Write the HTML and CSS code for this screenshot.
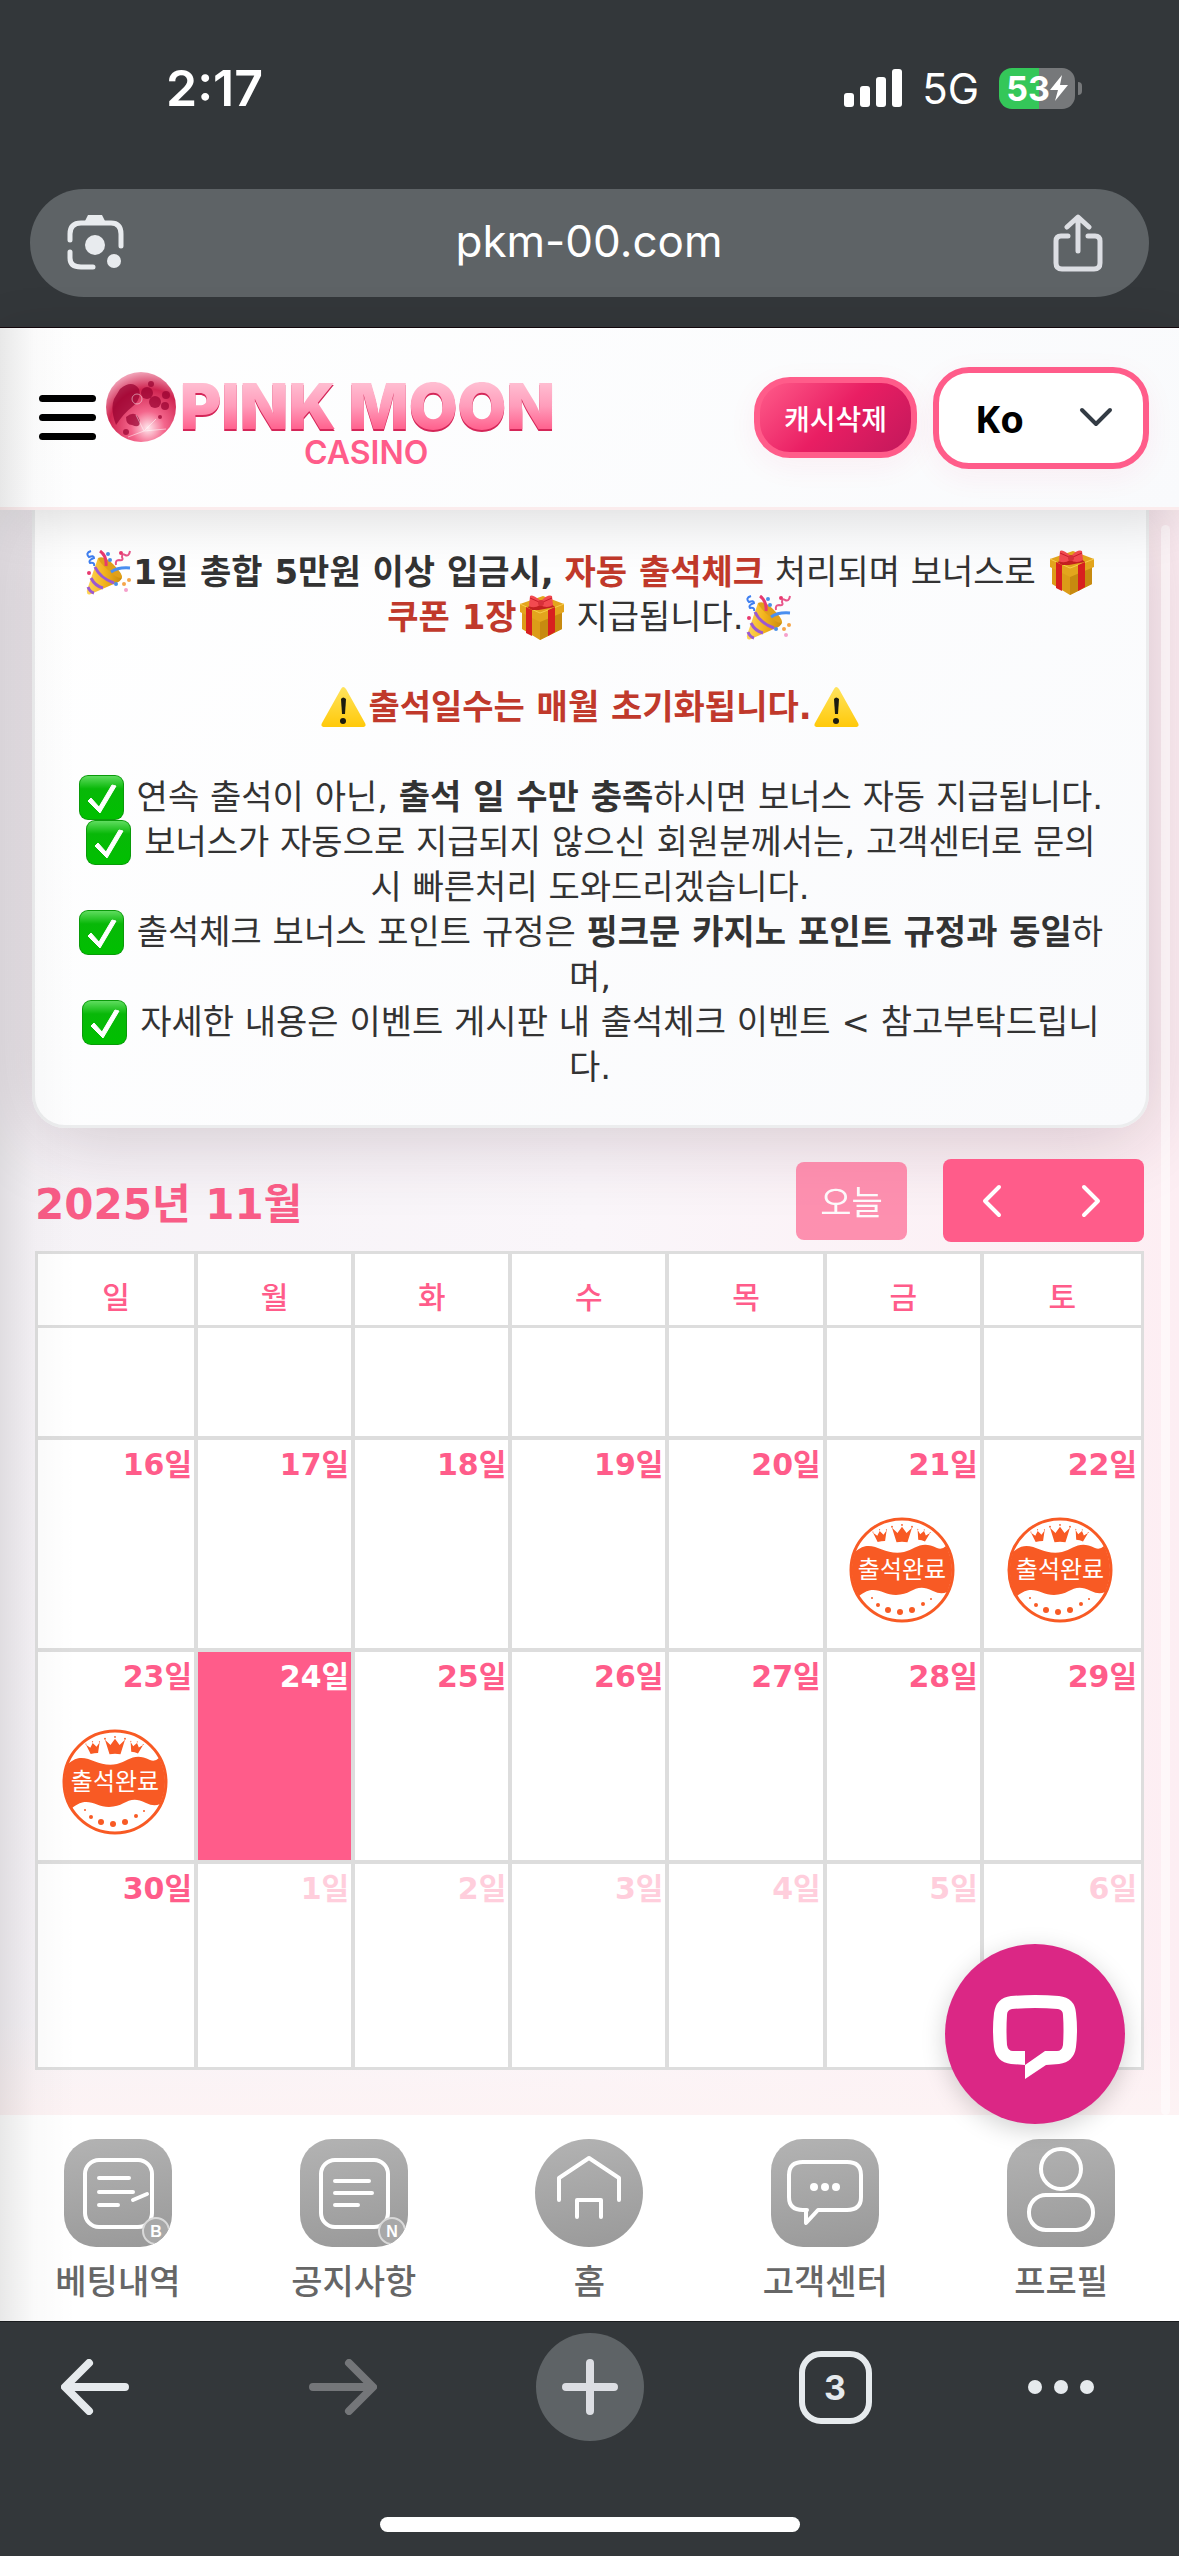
FILE: index.html
```html
<!DOCTYPE html>
<html lang="ko">
<head>
  <meta charset="UTF-8">
  <meta name="viewport" content="width=device-width, initial-scale=1">
  <title>PINK MOON CASINO</title>
  <link rel="stylesheet" href="styles.css">
</head>
<body>

  <!-- Shared drawings -->
  <svg class="defs" aria-hidden="true">
    <defs>
      <linearGradient id="gold" x1="0" y1="0" x2="1" y2="0">
        <stop offset="0" stop-color="#ffd75a"/>
        <stop offset="0.5" stop-color="#f2b31c"/>
        <stop offset="1" stop-color="#c98a0a"/>
      </linearGradient>
      <linearGradient id="green" x1="0" y1="0" x2="0" y2="1">
        <stop offset="0" stop-color="#5fdc5f"/>
        <stop offset="0.3" stop-color="#08b808"/>
        <stop offset="1" stop-color="#00c000"/>
      </linearGradient>
      <linearGradient id="warn" x1="0" y1="0" x2="0" y2="1">
        <stop offset="0" stop-color="#ffe45e"/>
        <stop offset="1" stop-color="#ffc90a"/>
      </linearGradient>
      <symbol id="popper" viewBox="0 0 45 45">
        <path d="M12 8 L36 28 Q34 32 30 33 L5 44 Q0 46 1 40 Z" fill="url(#gold)"/>
        <path d="M12 8 Q18 5 27 14 Q37 24 36 28 Q31 29 22 20 Q13 12 12 8 Z" fill="#e0a01a"/>
        <path d="M9 17 Q14 28 28 33 M5 28 Q9 36 17 38 M2 37 Q4 42 8 43" stroke="#9b59d0" stroke-width="3" fill="none"/>
        <path d="M25 22 Q32 17 44 18" stroke="#4a8ff0" stroke-width="3" fill="none"/>
        <path d="M20 16 Q21 6 14 1" stroke="#e8396f" stroke-width="3" fill="none"/>
        <path d="M5 1 Q-1 3 3 7 Q8 5 8 8 Q2 10 4 13 Q9 12 8 16" stroke="#3f7ff0" stroke-width="2" fill="none"/>
        <path d="M44 1 Q43 7 39 5 Q36 3 36 7 Q38 11 33 10 Q29 10 30 15" stroke="#e8558a" stroke-width="2" fill="none"/>
        <circle cx="22" cy="4" r="2" fill="#4a8fe8"/>
        <circle cx="24" cy="10" r="2" fill="#4a8fe8"/>
        <circle cx="35" cy="3" r="2" fill="#e8396f"/>
        <circle cx="3" cy="23" r="2" fill="#e8396f"/>
        <circle cx="43" cy="30" r="2" fill="#f5a64a"/>
        <circle cx="38" cy="34" r="2" fill="#f5a64a"/>
        <circle cx="30" cy="34" r="2" fill="#4a8fe8"/>
        <circle cx="40" cy="40" r="2" fill="#f5a0cc"/>
      </symbol>
      <symbol id="gift" viewBox="0 0 45 45">
        <path d="M3 16 L21 24 L43 16 V34 L21 45 L3 34 Z" fill="#dc9c18"/>
        <path d="M21 24 L43 16 V34 L21 45 Z" fill="#c78a10"/>
        <path d="M1 9 L24 1 L45 9 V17 L21 27 L1 17 Z" fill="#e3a51d"/>
        <path d="M1 9 L21 18 L45 9" stroke="#f7cd4a" fill="none"/>
        <path d="M7 12 L13 15 V41 L7 38 Z M29 15 L36 12 V37 L29 41 Z" fill="#d8201f"/>
        <path d="M8 12 L30 7 L36 12 L20 15 L13 15 Z" fill="#c42020"/>
        <path d="M22 6 Q13 -1 11 1 L10 11 Q15 14 21 10 Q28 14 34 10 L33 1 Q29 -1 22 6 Z" fill="#f24a50"/>
        <path d="M11 3 L20 7 M33 3 L24 7" stroke="#c91d2a" stroke-width="1"/>
        <circle cx="22" cy="8" r="3" fill="#d8303a"/>
      </symbol>
      <symbol id="warning" viewBox="0 0 45 45">
        <path d="M20 4 Q22 0 25 4 L44 38 Q46 42 41 42 H4 Q-1 42 1 38 Z" fill="url(#warn)"/>
        <path d="M20 14 Q22 11 25 14 L24 29 H21 Z" fill="#1c1c10"/>
        <circle cx="22" cy="36" r="3" fill="#1c1c10"/>
      </symbol>
      <symbol id="check" viewBox="0 0 45 45">
        <rect x="0" y="0" width="45" height="45" rx="9" fill="#0a9a0a"/>
        <rect x="1" y="1" width="43" height="43" rx="8" fill="url(#green)"/>
        <path d="M9 26 L12 23 L20 32 L33 10 L37 11 L21 38 Z" fill="#fff" stroke="#fff" stroke-linejoin="round"/>
      </symbol>
      <symbol id="crown" viewBox="0 0 24 22">
        <path d="M1 4 L7 10 L12 3 L17 10 L23 4 L18 20 Q12 19 6 20 Z"/>
        <circle cx="1" cy="3" r="1"/><circle cx="12" cy="1" r="1"/><circle cx="23" cy="3" r="1"/>
      </symbol>
      <symbol id="stamp" viewBox="0 0 106 106">
        <circle cx="53" cy="53" r="51" fill="#fff" stroke="#f85a24" stroke-width="3"/>
        <path d="M6 35 C23 19 34 40 55 35 C67 32 72 23 88 31 Q93 33 97 29 A51 51 0 0 1 98 75 Q92 78 84 74 C66 65 64 78 47 78 C33 78 26 66 10 79 A51 51 0 0 1 6 35 Z" fill="#f85a24"/>
        <g fill="#f85a24">
          <use href="#crown" x="42" y="7" width="22" height="20"/>
          <use href="#crown" x="24" y="12" width="15" height="14" transform="rotate(-9 31 19)"/>
          <use href="#crown" x="67" y="12" width="14" height="13" transform="rotate(14 74 18)"/>
          <circle cx="23" cy="81" r="1"/><circle cx="29" cy="88" r="2"/><circle cx="39" cy="93" r="3"/>
          <circle cx="51" cy="95" r="3"/><circle cx="63" cy="93" r="3"/><circle cx="74" cy="87" r="2"/><circle cx="82" cy="82" r="1"/>
        </g>
        <text x="53" y="61" text-anchor="middle" font-size="24" fill="#fff">출석완료</text>
      </symbol>
      <linearGradient id="logoPink" x1="0" y1="0" x2="0" y2="1">
        <stop offset="0" stop-color="#ffd3e0"/>
        <stop offset="0.5" stop-color="#ff9dbb"/>
        <stop offset="0.9" stop-color="#ff4f80"/>
      </linearGradient>
      <radialGradient id="moonPink" cx="0.6" cy="0.8" r="0.8">
        <stop offset="0" stop-color="#ffe9ee"/>
        <stop offset="0.3" stop-color="#f4668c"/>
        <stop offset="0.7" stop-color="#cf2450"/>
        <stop offset="1" stop-color="#f0a0b5"/>
      </radialGradient>
    </defs>
  </svg>

  <!-- Phone status + address bar -->
  <div class="browser-top">
    <div class="status">
      <span class="time">2:17</span>
      <div class="status-right">
        <svg width="58" height="38" viewBox="0 0 58 38" fill="#fff">
          <rect x="0" y="24" width="10" height="14" rx="3"/>
          <rect x="16" y="17" width="10" height="21" rx="3"/>
          <rect x="32" y="8" width="10" height="30" rx="3"/>
          <rect x="48" y="0" width="10" height="38" rx="3"/>
        </svg>
        <span class="network">5G</span>
        <div class="battery">
          <span>53</span>
          <svg width="18" height="26" viewBox="0 0 18 26"><path d="M12 0 L0 15 H8 L5 26 L18 10 H10 Z" fill="#fff"/></svg>
        </div>
      </div>
    </div>
    <div class="address">
      <button class="plain" aria-label="Lens">
        <svg width="58" height="58" viewBox="0 0 58 58" fill="none" stroke="#e8ebee" stroke-width="5" stroke-linecap="round">
          <path d="M3 26 V20 Q3 9 14 9 H44 Q54 9 54 20 V32 M3 38 V44 Q3 53 14 53 H26"/>
          <path d="M17 9 L21 1 H35 L39 9 Z" fill="#e8ebee" stroke="none"/>
          <circle cx="28" cy="31" r="10" fill="#e8ebee" stroke="none"/>
          <circle cx="47" cy="47" r="7" fill="#e8ebee" stroke="none"/>
        </svg>
      </button>
      <span class="url">pkm-00.com</span>
      <button class="plain" aria-label="Share">
        <svg width="50" height="58" viewBox="0 0 50 58" fill="none" stroke="#dcdee3" stroke-width="5" stroke-linecap="round" stroke-linejoin="round">
          <path d="M15 22 H8 Q3 22 3 27 V49 Q3 55 9 55 H41 Q47 55 47 49 V27 Q47 22 42 22 H35 M25 37 V4 M14 13 L25 3 L36 13"/>
        </svg>
      </button>
    </div>
  </div>

  <div class="page">
    <!-- Header -->
    <header>
      <button class="plain menu" aria-label="메뉴"><i></i><i></i><i></i></button>
      <a href="#" class="logo" aria-label="PINK MOON CASINO">
        <svg width="460" height="112" viewBox="0 0 460 112">
          <g transform="translate(0 9)">
            <circle cx="35" cy="36" r="35" fill="url(#moonPink)"/>
            <g fill="#97002f" opacity="0.7">
              <path d="M14 18 Q26 8 33 18 Q36 28 26 36 Q18 42 10 54 Q4 38 8 28 Z"/>
              <circle cx="41" cy="22" r="6"/><circle cx="49" cy="31" r="6"/><circle cx="60" cy="24" r="4"/>
              <circle cx="59" cy="35" r="4"/><circle cx="45" cy="13" r="3"/><circle cx="54" cy="46" r="2"/>
              <path d="M20 46 Q30 38 34 50 Q34 58 26 54 Q20 54 20 46 Z"/><circle cx="20" cy="61" r="3"/>
            </g>
            <g fill="none" stroke="#fff" opacity="0.5"><path d="M38 60 L30 44 M38 60 L50 48 M38 60 L22 66 M38 60 L60 58"/><circle cx="31" cy="28" r="5"/></g>
          </g>
          <text class="wordmark" x="74" y="67">PINK MOON</text>
          <text class="wordmark-sub" x="198" y="102">CASINO</text>
        </svg>
      </a>
      <button class="cache-btn">캐시삭제</button>
      <div class="lang">
        <select aria-label="언어"><option>Ko</option><option>En</option></select>
        <svg width="34" height="20" viewBox="0 0 34 20"><path d="M3 3 L17 17 L31 3" fill="none" stroke="#333b44" stroke-width="4" stroke-linecap="round" stroke-linejoin="round"/></svg>
      </div>
    </header>

    <main>
      <!-- Notice -->
      <section class="notice">
        <p>
          <svg class="emoji"><use href="#popper"/></svg><b>1일 총합 5만원 이상 입금시,</b> <b class="red">자동 출석체크</b> 처리되며 보너스로 <svg class="emoji"><use href="#gift"/></svg><br>
          <b class="red">쿠폰 1장</b><svg class="emoji"><use href="#gift"/></svg> 지급됩니다.<svg class="emoji"><use href="#popper"/></svg>
        </p>
        <p><svg class="emoji"><use href="#warning"/></svg><b class="red">출석일수는 매월 초기화됩니다.</b><svg class="emoji"><use href="#warning"/></svg></p>
        <p>
          <svg class="emoji"><use href="#check"/></svg> 연속 출석이 아닌, <b>출석 일 수만 충족</b>하시면 보너스 자동 지급됩니다.<br>
          <svg class="emoji"><use href="#check"/></svg> 보너스가 자동으로 지급되지 않으신 회원분께서는, 고객센터로 문의<br>시 빠른처리 도와드리겠습니다.<br>
          <svg class="emoji"><use href="#check"/></svg> 출석체크 보너스 포인트 규정은 <b>핑크문 카지노 포인트 규정과 동일</b>하<br>며,<br>
          <svg class="emoji"><use href="#check"/></svg> 자세한 내용은 이벤트 게시판 내 출석체크 이벤트 &lt; 참고부탁드립니<br>다.
        </p>
      </section>

      <!-- Calendar -->
      <section class="calendar">
        <div class="toolbar">
          <h2>2025년 11월</h2>
          <button class="today-btn" disabled>오늘</button>
          <div class="nav-btns">
            <button aria-label="이전"><svg width="22" height="34" viewBox="0 0 22 34"><path d="M18 3 L4 17 L18 31"/></svg></button>
            <button aria-label="다음"><svg width="22" height="34" viewBox="0 0 22 34"><path d="M4 3 L18 17 L4 31"/></svg></button>
          </div>
        </div>
        <table>
          <thead>
            <tr><th>일</th><th>월</th><th>화</th><th>수</th><th>목</th><th>금</th><th>토</th></tr>
          </thead>
          <tbody>
            <tr class="cut"><td></td><td></td><td></td><td></td><td></td><td></td><td></td></tr>
            <tr>
              <td>16일</td><td>17일</td><td>18일</td><td>19일</td><td>20일</td>
              <td>21일<svg class="stamp"><use href="#stamp"/></svg></td>
              <td>22일<svg class="stamp"><use href="#stamp"/></svg></td>
            </tr>
            <tr>
              <td>23일<svg class="stamp"><use href="#stamp"/></svg></td>
              <td class="today">24일</td><td>25일</td><td>26일</td><td>27일</td><td>28일</td><td>29일</td>
            </tr>
            <tr>
              <td>30일</td><td class="other">1일</td><td class="other">2일</td><td class="other">3일</td>
              <td class="other">4일</td><td class="other">5일</td><td class="other">6일</td>
            </tr>
          </tbody>
        </table>
      </section>
      <div class="scrollbar"></div>
    </main>

    <!-- Bottom tabs -->
    <nav class="tabs">
      <a href="#">
        <svg class="tab-icon" viewBox="0 0 108 108">
          <rect x="21" y="21" width="67" height="67" rx="14"/>
          <path d="M35 39 H65 M35 53 H69 M35 66 H54 M69 61 L83 55"/>
          <circle class="badge" cx="92" cy="92" r="13"/><text x="92" y="98">B</text>
        </svg>
        베팅내역
      </a>
      <a href="#">
        <svg class="tab-icon" viewBox="0 0 108 108">
          <rect x="21" y="21" width="67" height="67" rx="14"/>
          <path d="M35 42 H69 M35 54 H72 M35 66 H58"/>
          <circle class="badge" cx="92" cy="92" r="13"/><text x="92" y="98">N</text>
        </svg>
        공지사항
      </a>
      <a href="#">
        <svg class="tab-icon round" viewBox="0 0 108 108">
          <path d="M24 61 V39 L54 19 L84 39 V61 M42 78 V61 H66 V78"/>
        </svg>
        홈
      </a>
      <a href="#">
        <svg class="tab-icon" viewBox="0 0 108 108">
          <path d="M36 71 H32 Q18 71 18 58 V36 Q18 23 32 23 H76 Q90 23 90 36 V58 Q90 71 76 71 H47 L35 84 V71"/>
          <circle class="dot" cx="43" cy="48" r="4"/><circle class="dot" cx="54" cy="48" r="4"/><circle class="dot" cx="65" cy="48" r="4"/>
        </svg>
        고객센터
      </a>
      <a href="#">
        <svg class="tab-icon" viewBox="0 0 108 108">
          <circle cx="54" cy="30" r="20"/>
          <rect x="22" y="56" width="64" height="35" rx="17"/>
        </svg>
        프로필
      </a>
    </nav>

    <button class="chat" aria-label="채팅">
      <svg width="84" height="84" viewBox="0 0 84 84">
        <path fill="#fff" fill-rule="evenodd" d="M18 1 Q42 -1 66 1 Q82 3 83 18 Q85 35 83 52 Q81 67 66 69 L53 70 L32 84 V70 L18 69 Q3 67 1 52 Q-1 35 1 18 Q3 3 18 1 Z M19 14 Q14 15 14 20 Q13 35 14 50 Q15 56 20 56 H32 V70 L52 56 H64 Q69 56 70 50 Q71 35 70 20 Q70 15 65 14 Q42 12 19 14 Z"/>
      </svg>
    </button>
  </div>

  <!-- Browser toolbar -->
  <footer>
    <div class="browser-nav">
      <div class="nav-left">
        <button class="plain" aria-label="Back"><svg width="68" height="56" viewBox="0 0 68 56" stroke="#e6eaed"><path d="M28 4 L4 28 L28 52 M6 28 H64"/></svg></button>
        <button class="plain" aria-label="Forward"><svg width="68" height="56" viewBox="0 0 68 56" stroke="#747679"><path d="M40 4 L64 28 L40 52 M62 28 H4"/></svg></button>
      </div>
      <button class="plain new-tab" aria-label="New tab"><svg width="56" height="56" viewBox="0 0 56 56" stroke="#dcdee3"><path d="M28 4 V52 M4 28 H52"/></svg></button>
      <div class="nav-right">
        <button class="plain" aria-label="Open tabs"><span class="tab-count">3</span></button>
        <button class="plain" aria-label="More"><svg width="68" height="16" viewBox="0 0 68 16"><g fill="#e6eaed" stroke="none"><circle cx="8" cy="8" r="7"/><circle cx="34" cy="8" r="7"/><circle cx="60" cy="8" r="7"/></g></svg></button>
      </div>
    </div>
    <div class="home-bar"></div>
  </footer>

</body>
</html>
```
FILE: styles.css
```css
* {
  box-sizing: border-box;
}

body {
  margin: 0;
  background: #33373a;
  font-family: 'DejaVu Sans', 'Noto Sans CJK KR', sans-serif;
}

.defs {
  position: absolute;
  width: 0;
  height: 0;
}

svg {
  display: block;
}

button {
  font-family: inherit;
  cursor: pointer;
}

.plain {
  padding: 0;
  border: 0;
  background: none;
}

/* Status + address bar */
.browser-top {
  padding: 54px 30px 30px;
  border-bottom: 1px solid #14080d;
  color: #fff;
  font-family: Inter, 'Noto Sans CJK KR', sans-serif;
}

.status {
  display: flex;
  justify-content: space-between;
  align-items: center;
  height: 68px;
  padding: 0 67px 0 136px;
  margin-bottom: 67px;
}

.time {
  font-size: 50px;
  font-weight: 600;
}

.status-right {
  display: flex;
  align-items: center;
}

.network {
  margin: 0 20px;
  font-size: 42px;
}

.battery {
  position: relative;
  display: flex;
  align-items: center;
  justify-content: center;
  width: 76px;
  height: 41px;
  margin-right: 7px;
  border-radius: 13px;
  background: linear-gradient(to right, #34c759 53%, #76787a 53%);
  font-size: 34px;
  font-weight: 700;
}

.battery::after {
  content: "";
  position: absolute;
  right: -7px;
  width: 4px;
  height: 13px;
  border-radius: 0 4px 4px 0;
  background: #76787a;
}

.address {
  display: flex;
  align-items: center;
  justify-content: space-between;
  height: 108px;
  padding: 0 46px 0 37px;
  border-radius: 54px;
  background: #5e6366;
}

.url {
  padding-bottom: 4px;
  font-size: 44px;
}

/* Page */
.page {
  position: relative;
  background:
    linear-gradient(to top, #fdf3f4 206px, rgba(253, 243, 244, 0) 300px),
    linear-gradient(to right, #f6f3f7, #faf6fa 50%, #fdeef3);
}

/* Soft shade down the left edge */
.page::after {
  content: "";
  position: absolute;
  z-index: 2;
  inset: 0 auto 0 0;
  width: 76px;
  background: linear-gradient(to right, rgba(0, 0, 0, 0.09), rgba(0, 0, 0, 0.02) 45%, transparent);
  pointer-events: none;
}

header {
  position: relative;
  z-index: 1;
  display: flex;
  align-items: center;
  height: 182px;
  padding: 0 30px 0 39px;
  border-bottom: 3px solid #fbeced;
  background: linear-gradient(135deg, #fff, #f9fafc);
  box-shadow: 0 8px 50px rgba(0, 0, 0, 0.14);
}

.menu {
  display: grid;
  gap: 12px;
  width: 57px;
  margin-right: 10px;
}

.menu i {
  height: 7px;
  border-radius: 4px;
  background: #000;
}

.logo {
  margin-right: auto;
}

.wordmark {
  font: 900 63px Inter, sans-serif;
  fill: url(#logoPink);
  filter: drop-shadow(0 2px 0 #d42658);
}

.wordmark-sub {
  font: 600 32px Inter, sans-serif;
  fill: #ff5c8a;
}

.cache-btn {
  width: 163px;
  height: 81px;
  margin-right: 16px;
  padding: 0;
  border: 6px solid #ff5c8a;
  border-radius: 36px;
  background: linear-gradient(135deg, #ff5c8a, #e91e63 50%, #c2185b);
  color: #fff;
  font-size: 28px;
  font-weight: 500;
  box-shadow: 0 8px 30px rgba(233, 30, 99, 0.06);
}

.lang {
  position: relative;
  width: 216px;
  height: 102px;
}

.lang select {
  width: 100%;
  height: 100%;
  padding: 0 36px;
  border: 6px solid #ff5c8a;
  border-radius: 36px;
  background: #fff;
  color: #000;
  font: bold 38px 'Noto Sans', sans-serif;
  appearance: none;
  box-shadow: 0 8px 30px rgba(233, 30, 99, 0.06);
}

.lang svg {
  position: absolute;
  right: 36px;
  top: 40px;
  pointer-events: none;
}

main {
  position: relative;
  padding: 0 35px 45px;
}

.notice {
  margin: 0 -5px 31px -3px;
  padding: 40px 1px 35px 0;
  border: 3px solid #ecedee;
  border-top: 0;
  border-radius: 0 0 33px 33px;
  background: linear-gradient(135deg, #fff, #f9fafc);
  box-shadow: 0 10px 80px rgba(60, 20, 40, 0.2);
  color: #333;
  font-size: 34px;
  line-height: 45px;
  text-align: center;
}

.notice p {
  margin: 0 0 45px;
}

.notice p:last-child {
  margin: 0;
}

.red {
  color: #c0392b;
}

.emoji {
  display: inline-block;
  width: 45px;
  height: 45px;
  margin: -8px 2px -3px;
  vertical-align: middle;
}

/* Calendar */
.toolbar {
  display: flex;
  align-items: center;
  height: 83px;
  margin-bottom: 9px;
}

.toolbar h2 {
  margin: 0 auto 0 0;
  color: #f85c86;
  font-size: 42px;
}

.today-btn {
  width: 111px;
  height: 78px;
  margin-right: 36px;
  padding: 0;
  border: 0;
  border-radius: 8px;
  background: #ff5c8a;
  color: #fff;
  font-size: 34px;
  opacity: 0.65;
}

.nav-btns {
  display: flex;
  width: 201px;
  height: 83px;
  padding-right: 4px;
  border-radius: 8px;
  background: #ff5c8a;
}

.nav-btns button {
  flex: 1;
  display: grid;
  place-items: center;
  padding: 0;
  border: 0;
  background: none;
}

.nav-btns path {
  fill: none;
  stroke: #fff;
  stroke-width: 4;
  stroke-linecap: round;
  stroke-linejoin: round;
}

table {
  position: relative;
  width: 100%;
  border: 3px solid #ddd;
  border-spacing: 0;
  background: #fff;
  table-layout: fixed;
  color: #ff5c8a;
  font-size: 30px;
}

th {
  height: 74px;
  padding: 10px 0 0;
  border-right: 4px solid #ddd;
  border-bottom: 3px solid #ddd;
  font-weight: 500;
}

th:first-child {
  width: 160px;
}

td {
  height: 212px;
  padding: 4px 2px 0 0;
  border-right: 4px solid #ddd;
  border-bottom: 4px solid #ddd;
  font-weight: bold;
  line-height: 42px;
  text-align: right;
  vertical-align: top;
}

th:last-child,
td:last-child {
  border-right: 0;
}

td:last-child {
  padding-right: 4px;
}

tr:last-child td {
  height: 203px;
  border-bottom: 0;
}

.cut td {
  height: 112px;
}

.today {
  background: #ff5c8a;
  background-clip: padding-box;
  color: #fff;
}

.other {
  color: #ffcedc;
}

.stamp {
  width: 106px;
  height: 106px;
  margin: 31px auto 0;
  font-family: 'Noto Sans CJK KR', sans-serif;
  font-weight: normal;
}

.scrollbar {
  position: absolute;
  top: 15px;
  right: 9px;
  bottom: 0;
  width: 9px;
  border-radius: 5px;
  background: rgba(255, 255, 255, 0.5);
}

/* Bottom tabs */
.tabs {
  display: flex;
  height: 206px;
  background: #fff;
}

.tabs a {
  flex: 1;
  display: flex;
  flex-direction: column;
  align-items: center;
  padding-top: 24px;
  color: #666;
  font-size: 34px;
  font-weight: 500;
  line-height: 70px;
  text-decoration: none;
}

.tab-icon {
  width: 108px;
  height: 108px;
  border-radius: 32px;
  background: linear-gradient(170deg, #b3b3b3, #999);
  fill: none;
  stroke: #fff;
  stroke-width: 4;
  stroke-linecap: round;
  stroke-linejoin: round;
}

.tab-icon.round {
  border-radius: 50%;
}

.tab-icon .badge {
  fill: #a8a8a8;
  stroke: #d9d9d9;
  stroke-width: 2;
}

.tab-icon .dot {
  fill: #fff;
  stroke: none;
}

.tab-icon text {
  font: bold 16px 'Liberation Sans', sans-serif;
  fill: #fff;
  stroke: none;
  text-anchor: middle;
}

.chat {
  position: absolute;
  z-index: 3;
  right: 54px;
  bottom: 197px;
  display: grid;
  place-items: center;
  width: 180px;
  height: 180px;
  padding: 5px 0 0;
  border: 0;
  border-radius: 50%;
  background: #db2785;
  box-shadow: 0 6px 24px rgba(0, 0, 0, 0.18);
}

/* Browser toolbar */
footer {
  padding: 11px 0 24px;
  border-top: 1px solid #1a1d1f;
  font-family: Inter, sans-serif;
}

.browser-nav {
  display: grid;
  grid-template-columns: 1fr auto 1fr;
  align-items: center;
  margin-bottom: 76px;
}

.nav-left,
.nav-right {
  display: flex;
  justify-content: space-between;
  align-items: center;
}

.nav-left {
  padding: 0 159px 0 61px;
}

.nav-right {
  padding: 0 84px 0 155px;
}

.browser-nav svg {
  fill: none;
  stroke-width: 8;
  stroke-linecap: round;
  stroke-linejoin: round;
}

.new-tab {
  display: grid;
  place-items: center;
  width: 108px;
  height: 108px;
  border-radius: 50%;
  background: #5e6366;
}

.tab-count {
  display: block;
  width: 73px;
  height: 73px;
  border: 6px solid #e6eaed;
  border-radius: 22px;
  color: #e6eaed;
  font-size: 34px;
  font-weight: 700;
  line-height: 62px;
}

.home-bar {
  width: 420px;
  height: 15px;
  margin: 0 auto;
  border-radius: 8px;
  background: #fff;
}
```
